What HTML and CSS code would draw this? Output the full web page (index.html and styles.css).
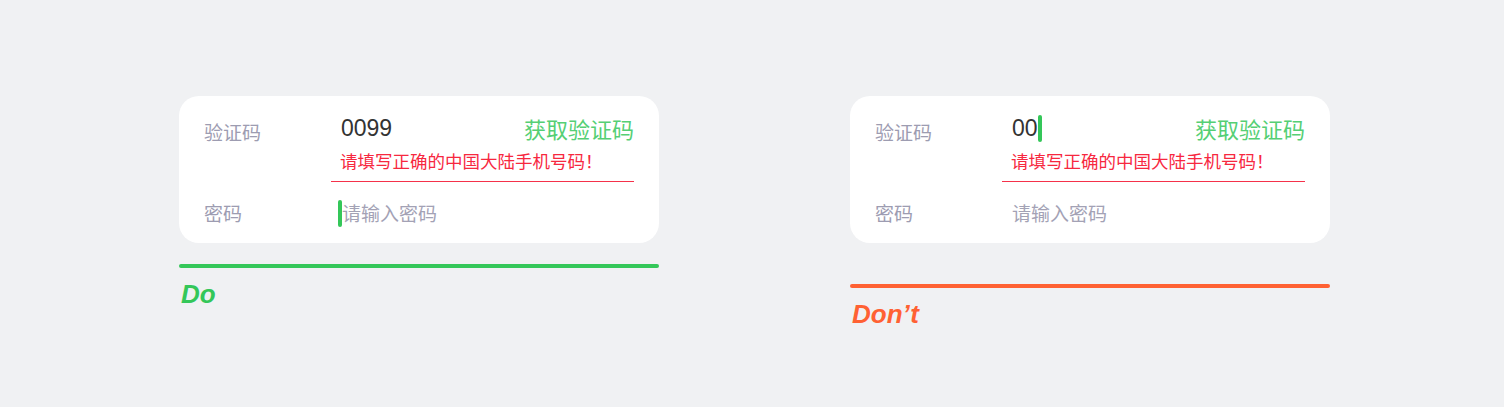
FILE: index.html
```html
<!DOCTYPE html>
<html lang="zh-CN">
<head>
<meta charset="utf-8">
<title>验证码 Do / Don't</title>
<link rel="stylesheet" href="styles.css">
</head>
<body>
<main class="page">
  <section class="example">
    <div class="card">
      <div class="row row-code">
        <div class="label label-code">验证码</div>
        <div class="field field-error">
          <div class="value-line">
            <span class="value">0099</span>
            <span class="link">获取验证码</span>
          </div>
          <div class="error">请填写正确的中国大陆手机号码！</div>
          <div class="error-line"></div>
        </div>
      </div>
      <div class="row row-pass">
        <div class="label">密码</div>
        <div class="field">
          <span class="cursor cursor-before"></span><span class="placeholder">请输入密码</span>
        </div>
      </div>
    </div>
    <div class="bar bar-do"></div>
    <div class="verdict verdict-do">Do</div>
  </section>

  <section class="example">
    <div class="card">
      <div class="row row-code">
        <div class="label label-code">验证码</div>
        <div class="field field-error">
          <div class="value-line">
            <span class="value">00<span class="cursor cursor-after"></span></span>
            <span class="link">获取验证码</span>
          </div>
          <div class="error">请填写正确的中国大陆手机号码！</div>
          <div class="error-line"></div>
        </div>
      </div>
      <div class="row row-pass">
        <div class="label">密码</div>
        <div class="field">
          <span class="placeholder">请输入密码</span>
        </div>
      </div>
    </div>
    <div class="bar bar-dont"></div>
    <div class="verdict verdict-dont">Don’t</div>
  </section>
</main>
</body>
</html>
```

FILE: styles.css
```css
* { box-sizing: border-box; }

html, body {
  margin: 0;
  padding: 0;
  background: #f0f1f3;
}

body {
  width: 1504px;
  height: 407px;
  overflow: hidden;
  font-family: "Noto Sans CJK SC", "Liberation Sans", sans-serif;
}

.page {
  display: flex;
  gap: 191px;
  padding: 96px 0 0 179px;
}

.example {
  width: 480px;
  display: flex;
  flex-direction: column;
}

.card {
  background: #ffffff;
  border-radius: 20px;
  padding: 0 25px;
  height: 147px;
}

.row {
  display: grid;
  grid-template-columns: 127px 1fr;
}

.label {
  font-size: 19px;
  line-height: 28px;
  color: #9d9cb1;
}

.label-code {
  padding-top: 22px;
}

.row-code {
  height: 86px;
}

.field-error {
  padding-top: 17px;
}

.value-line {
  display: flex;
  justify-content: space-between;
  align-items: center;
  height: 30px;
  padding-left: 10px;
}

.value {
  display: flex;
  align-items: center;
  font-family: "Liberation Sans", "Noto Sans CJK SC", sans-serif;
  font-size: 23px;
  color: #333333;
}

.link {
  font-size: 22px;
  line-height: 30px;
  color: #55cf74;
}

.error {
  margin-top: 6px;
  padding-left: 9px;
  font-size: 17.5px;
  line-height: 24px;
  color: #f7283f;
}

.error-line {
  margin-top: 8px;
  height: 1px;
  background: #f5314a;
}

.row-pass {
  padding-top: 17px;
}

.row-pass .field {
  display: flex;
  align-items: center;
  height: 28px;
  padding-left: 10px;
}

.placeholder {
  font-size: 19px;
  line-height: 28px;
  color: #a3a2b5;
}

.cursor {
  display: inline-block;
  width: 4px;
  height: 27px;
  border-radius: 2px;
  background: #34c759;
}

.cursor-before {
  margin-left: -3px;
}

.bar {
  height: 4px;
  border-radius: 2px;
}

.bar-do {
  margin-top: 21px;
  background: #34c759;
}

.bar-dont {
  margin-top: 41px;
  background: #ff6133;
}

.verdict {
  margin-top: 10px;
  padding-left: 2px;
  font-family: "Liberation Sans", sans-serif;
  font-weight: bold;
  font-style: italic;
  font-size: 26px;
  line-height: 32px;
}

.verdict-do { color: #34c759; }
.verdict-dont { color: #ff6133; }
```
